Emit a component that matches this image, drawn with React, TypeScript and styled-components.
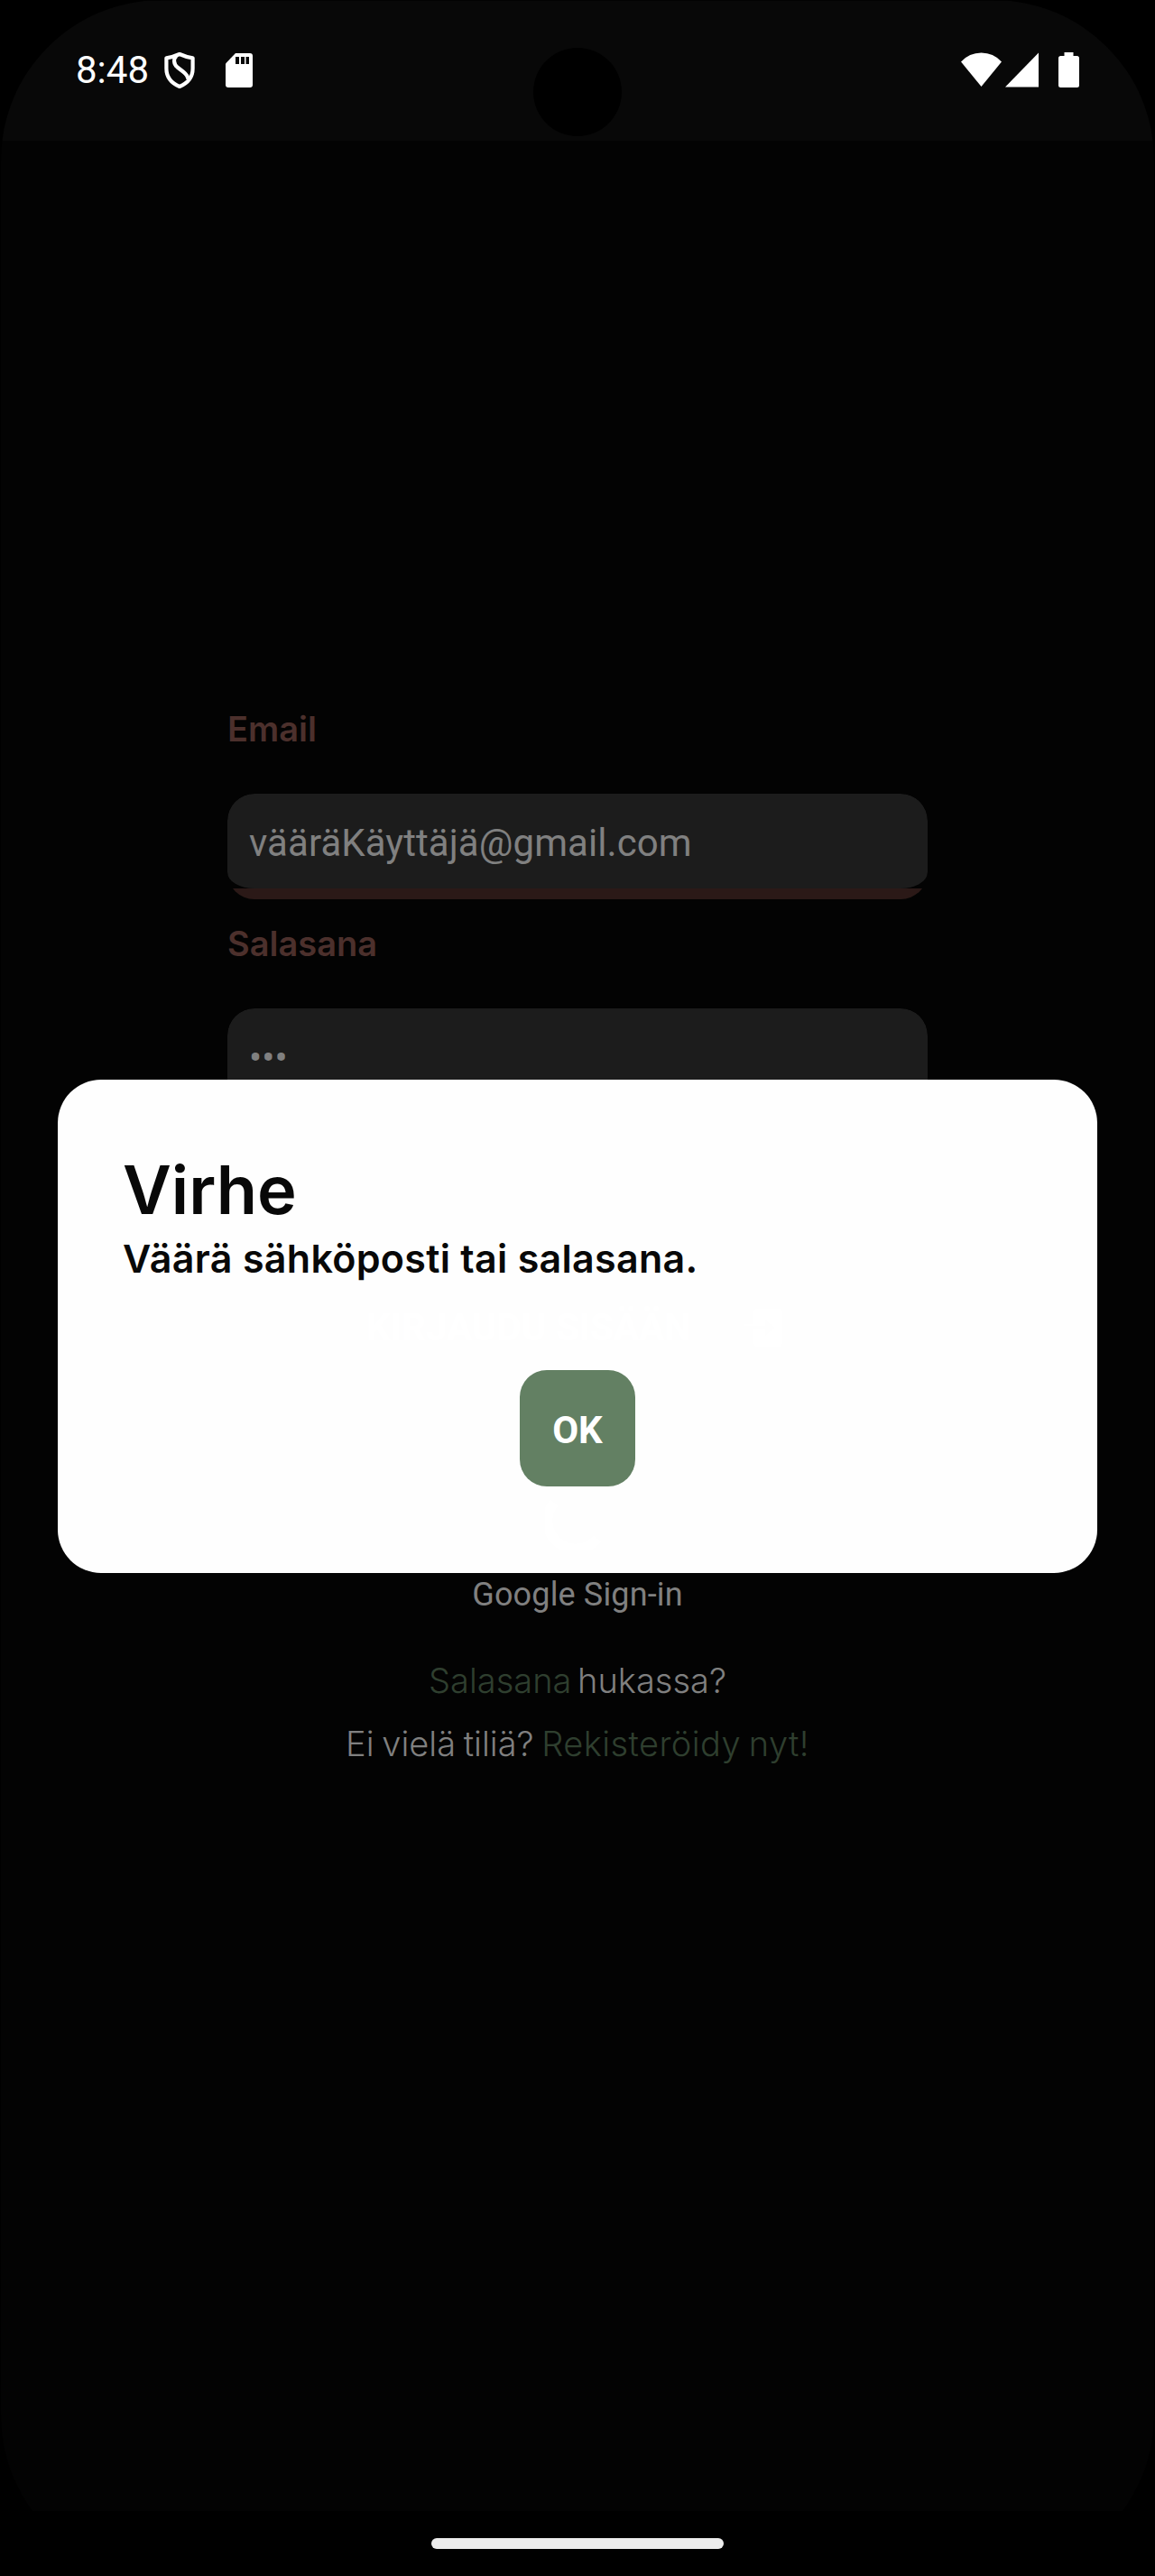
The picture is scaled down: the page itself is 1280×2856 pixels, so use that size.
import React from 'react';
import styled, { createGlobalStyle } from 'styled-components';

const GlobalStyle = createGlobalStyle`
  *, *::before, *::after { box-sizing: border-box; }
  body { margin: 0; background: #000; }
`;

const ui = `Roboto, "Noto Sans", sans-serif`;
const brand = `Inter, "Noto Sans", sans-serif`;

const Device = styled.div`
  position: relative;
  width: 1280px;
  height: 2856px;
  background: #000;
`;

const Screen = styled.div`
  display: flex;
  flex-direction: column;
  height: 2856px;
  margin: 0 1px;
  padding-top: 1px;
  border-radius: 178px;
  overflow: hidden;
  background: #030303;
`;

const StatusBar = styled.header`
  display: flex;
  justify-content: space-between;
  align-items: flex-start;
  height: 155px;
  padding: 52px 83px 0;
  background: #080808;
`;

const StatusGroup = styled.div`
  display: flex;
  align-items: center;
  height: 49px;
`;

const Clock = styled.span`
  width: 81px;
  margin-right: 17px;
  font: 400 42px/49px ${ui};
  color: #fff;
`;

const Glyph = styled.svg<{ $gap?: number }>`
  display: block;
  margin-right: ${(p) => p.$gap ?? 0}px;
`;

const Camera = styled.div`
  position: absolute;
  top: 53px;
  left: 591px;
  width: 98px;
  height: 98px;
  border-radius: 50%;
  background: #000;
`;

const Login = styled.main`
  display: flex;
  flex: 1;
  flex-direction: column;
  align-items: center;
  padding-top: 628px;
`;

const Form = styled.form`
  display: flex;
  flex-direction: column;
  width: 776px;
`;

const Field = styled.label`
  display: block;
  margin-bottom: 25px;
`;

const FieldName = styled.span`
  display: block;
  margin-bottom: 47px;
  font: 600 38px/49px ${brand};
  color: #4c302c;
`;

const FieldBox = styled.div`
  height: 117px;
  border-radius: 30px;
  overflow: hidden;
  background: linear-gradient(transparent 105px, #2b1917 105px);
`;

const FieldValue = styled.div`
  height: 105px;
  padding: 30px 24px 0;
  border-radius: 30px 30px 30px 30px / 30px 30px 18px 18px;
  background: #1c1c1c;
  font: 400 42px/49px ${ui};
  letter-spacing: 0.06px;
  color: #808080;
  white-space: nowrap;
`;

const SubmitRow = styled.div`
  display: flex;
  align-items: center;
  margin: 187px 0 0 154px;
  font: 700 42px/49px ${ui};
  color: #fff;
`;

const SubmitText = styled.span`
  width: 360px;
  margin-right: 58px;
  white-space: nowrap;
`;

const GoogleMark = styled.svg`
  display: block;
  margin-top: 151px;
`;

const GoogleText = styled.div`
  margin: 28px 0 51px;
  font: 400 36px/42px ${ui};
  letter-spacing: 0.15px;
  color: #808080;
`;

const HelpLine = styled.p<{ $gap?: number }>`
  margin: 0 0 ${(p) => p.$gap ?? 0}px;
  font: 300 38px/46px ${brand};
  color: #808080;
  white-space: pre;
`;

const HelpPart = styled.span<{ $link?: boolean; $track?: number; $word?: number }>`
  color: ${(p) => (p.$link ? '#2f3f2f' : '#808080')};
  letter-spacing: ${(p) => p.$track ?? 0}px;
  word-spacing: ${(p) => p.$word ?? 0}px;
`;

const NavBar = styled.footer`
  display: flex;
  justify-content: center;
  height: 72px;
  padding-top: 30px;
  background: #000;
`;

const HomeHandle = styled.div`
  width: 324px;
  height: 12px;
  border-radius: 6px;
  background: #ececec;
`;

const Dialog = styled.section`
  position: absolute;
  top: 1197px;
  left: 64px;
  display: flex;
  flex-direction: column;
  width: 1152px;
  height: 547px;
  padding: 77px 72px 0;
  border-radius: 48px;
  background: rgba(255, 255, 255, 0.996);
`;

const DialogTitle = styled.h1`
  margin: 0 0 6px;
  font: 600 74px/90px ${brand};
  color: #080808;
`;

const DialogText = styled.p`
  margin: 0 0 98px;
  font: 600 43px/51px ${brand};
  letter-spacing: 0.29px;
  color: #080808;
`;

const DialogButton = styled.button`
  align-self: center;
  width: 128px;
  height: 129px;
  padding: 4px 0 0;
  border: 0;
  border-radius: 30px;
  background: #638063;
  font: 700 42px/49px ${ui};
  color: #fff;
`;

const ShieldIcon = () => (
  <Glyph $gap={34} width="34" height="40" viewBox="0 0 34 40" fill="none" stroke="#fff" strokeWidth="4.2" strokeLinejoin="round">
    <path d="M17 2Q10 5.200 2.400 6.300V18C2.400 28 9 34.600 17 38C25 34.600 31.600 28 31.600 18V6.300Q24 5.200 17 2Z" />
    <path d="M13.500 4C9.800 7.500 10.500 13 14.500 16.500L21 21.500C25 24.700 26.500 27 26.300 30" />
  </Glyph>
);

const CardIcon = () => (
  <Glyph width="30" height="38" viewBox="0 0 30 38">
    <path fill="#fff" d="M11 0H27Q30 0 30 3V35Q30 38 27 38H3Q0 38 0 35V11.500Z" />
    <path fill="#080808" d="M11 4h4v8h-4zM17 4h4v8h-4zM22.500 4h3.500v8h-3.500z" />
  </Glyph>
);

const WifiIcon = () => (
  <Glyph $gap={4} width="45" height="39" viewBox="0 0 45 39" fill="#fff">
    <path d="M0 10.500Q9 .5 22.500 .5Q36 .5 45 10.500L22.500 38Z" />
  </Glyph>
);

const SignalIcon = () => (
  <Glyph $gap={22} width="37" height="39" viewBox="0 0 37 39" fill="#fff">
    <path d="M37 .5V38.500H0Z" />
  </Glyph>
);

const BatteryIcon = () => (
  <Glyph width="23" height="39" viewBox="0 0 23 39" fill="#fff">
    <path d="M6.500 0H16.500V4H20.500Q23 4 23 6.500V36.500Q23 39 20.500 39H2.500Q0 39 0 36.500V6.500Q0 4 2.500 4H6.500Z" />
  </Glyph>
);

export default function App() {
  return (
    <>
      <GlobalStyle />
      <Device>
        <Screen>
          <StatusBar>
            <StatusGroup>
              <Clock>8:48</Clock>
              <ShieldIcon />
              <CardIcon />
            </StatusGroup>
            <StatusGroup>
              <WifiIcon />
              <SignalIcon />
              <BatteryIcon />
            </StatusGroup>
          </StatusBar>
          <Login>
            <Form>
              <Field>
                <FieldName>Email</FieldName>
                <FieldBox>
                  <FieldValue>vääräKäyttäjä@gmail.com</FieldValue>
                </FieldBox>
              </Field>
              <Field>
                <FieldName>Salasana</FieldName>
                <FieldBox>
                  <FieldValue>•••</FieldValue>
                </FieldBox>
              </Field>
              <SubmitRow>
                <SubmitText>KIRJAUDU SISÄÄN</SubmitText>
                <svg width="43" height="42" viewBox="0 0 43 42">
                  <path fill="#fff" fillRule="evenodd" d="M16 0H38Q43 0 43 5V37Q43 42 38 42H16Q11 42 11 37V23H24V30L35 21L24 12V19H0V17H11V5Q11 0 16 0Z" />
                </svg>
              </SubmitRow>
            </Form>
            <GoogleMark width="72" height="72" viewBox="0 0 72 72" fill="none" stroke="#fff" strokeWidth="11">
              <path d="M10 19A31 31 0 0 0 58 59" />
            </GoogleMark>
            <GoogleText>Google Sign-in</GoogleText>
            <HelpLine $gap={24}>
              <HelpPart $link>Salasana</HelpPart>
              <HelpPart $word={-4}> hukassa?</HelpPart>
            </HelpLine>
            <HelpLine>
              <HelpPart $word={-2}>Ei vielä tiliä? </HelpPart>
              <HelpPart $link $track={0.42} $word={-2.4}>Rekisteröidy nyt!</HelpPart>
            </HelpLine>
          </Login>
          <NavBar>
            <HomeHandle />
          </NavBar>
        </Screen>
        <Camera />
        <Dialog role="dialog">
          <DialogTitle>Virhe</DialogTitle>
          <DialogText>Väärä sähköposti tai salasana.</DialogText>
          <DialogButton>OK</DialogButton>
        </Dialog>
      </Device>
    </>
  );
}
